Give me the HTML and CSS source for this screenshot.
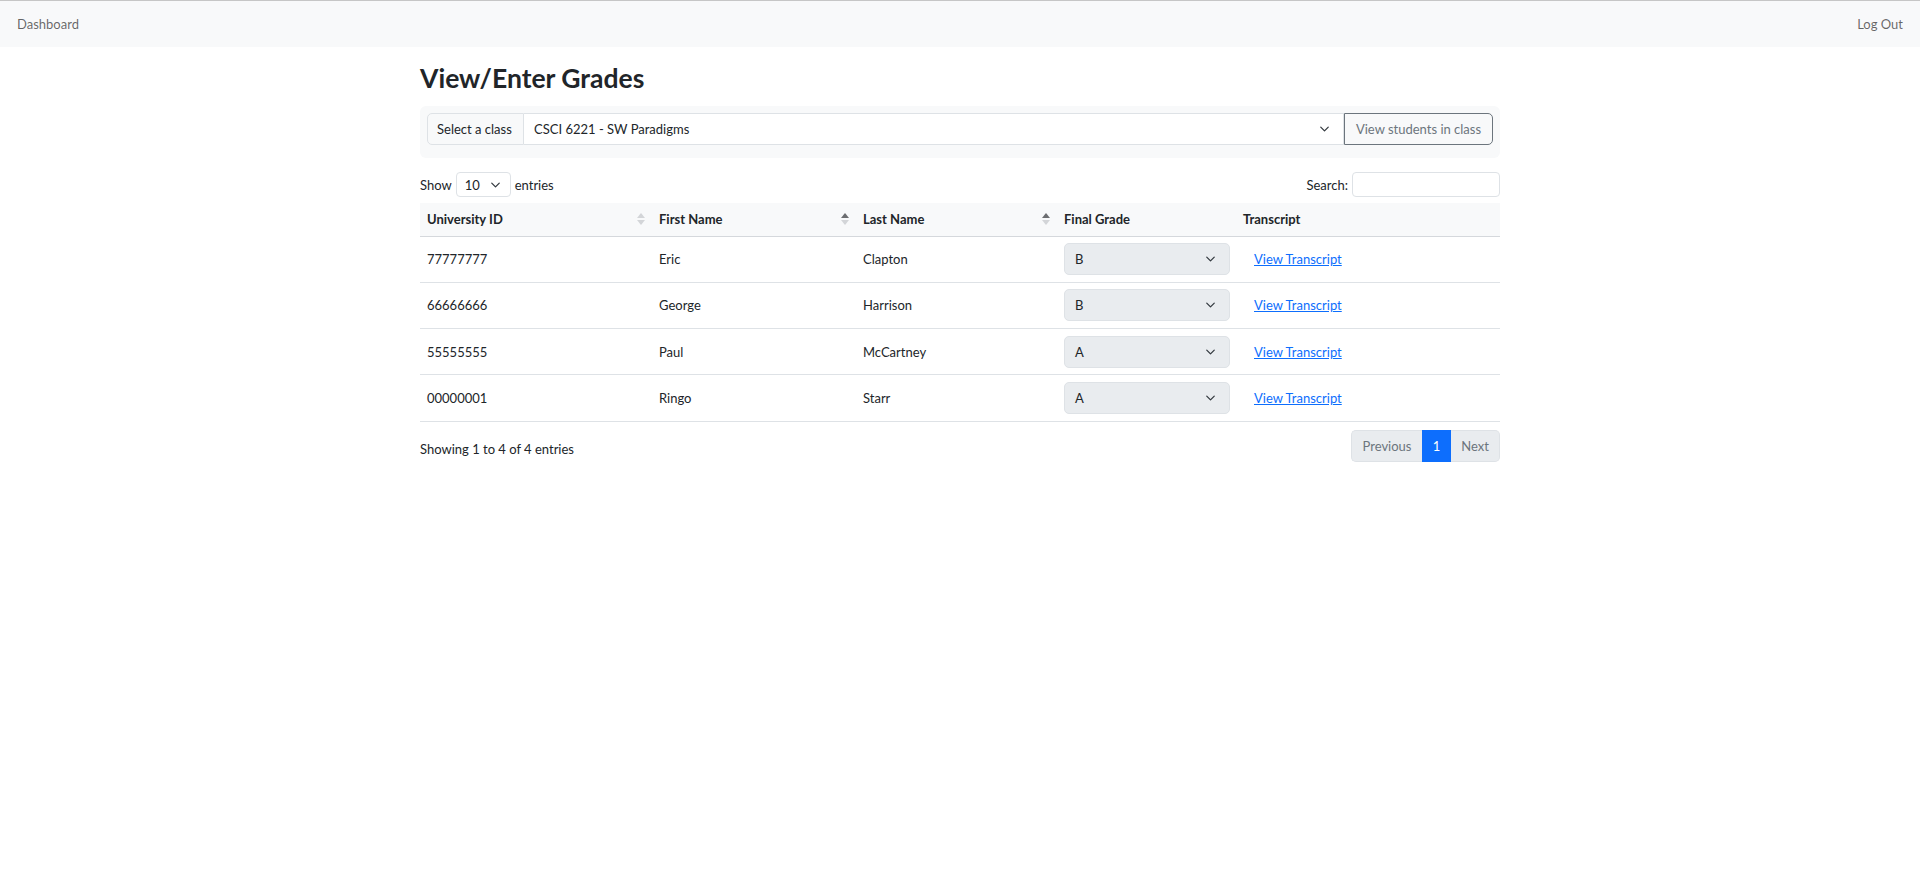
FILE: index.html
```html
<!DOCTYPE html>
<html lang="en">
<head>
<meta charset="utf-8">
<title>View/Enter Grades</title>
<link rel="stylesheet" href="styles.css">
</head>
<body>
<nav class="navbar">
  <a class="nav-link" href="#">Dashboard</a>
  <a class="nav-link" href="#">Log Out</a>
</nav>
<main class="container">
  <h1 class="title">View/Enter Grades</h1>
  <div class="panel">
    <div class="input-group">
      <span class="addon">Select a class</span>
      <div class="select wide"><span>CSCI 6221 - SW Paradigms</span><svg class="chev" viewBox="0 0 16 16"><path d="m2 5 6 6 6-6"/></svg></div>
      <button class="btn-outline">View students in class</button>
    </div>
  </div>
  <div class="dt-top">
    <div class="length">Show <div class="select small"><span>10</span><svg class="chev" viewBox="0 0 16 16"><path d="m2 5 6 6 6-6"/></svg></div> entries</div>
    <div class="search">Search: <span class="search-input"></span></div>
  </div>
  <table class="grid">
    <colgroup>
      <col class="c1"><col class="c2"><col class="c3"><col class="c4"><col class="c5">
    </colgroup>
    <thead>
      <tr>
        <th><div class="th-in">University ID<span class="sort"><i class="up"></i><i class="down"></i></span></div></th>
        <th><div class="th-in">First Name<span class="sort asc"><i class="up"></i><i class="down"></i></span></div></th>
        <th><div class="th-in">Last Name<span class="sort asc"><i class="up"></i><i class="down"></i></span></div></th>
        <th><div class="th-in">Final Grade</div></th>
        <th><div class="th-in">Transcript</div></th>
      </tr>
    </thead>
    <tbody>
      <tr><td>77777777</td><td>Eric</td><td>Clapton</td><td><div class="select grade"><span>B</span><svg class="chev" viewBox="0 0 16 16"><path d="m2 5 6 6 6-6"/></svg></div></td><td><a class="link" href="#">View Transcript</a></td></tr>
      <tr><td>66666666</td><td>George</td><td>Harrison</td><td><div class="select grade"><span>B</span><svg class="chev" viewBox="0 0 16 16"><path d="m2 5 6 6 6-6"/></svg></div></td><td><a class="link" href="#">View Transcript</a></td></tr>
      <tr><td>55555555</td><td>Paul</td><td>McCartney</td><td><div class="select grade"><span>A</span><svg class="chev" viewBox="0 0 16 16"><path d="m2 5 6 6 6-6"/></svg></div></td><td><a class="link" href="#">View Transcript</a></td></tr>
      <tr><td>00000001</td><td>Ringo</td><td>Starr</td><td><div class="select grade"><span>A</span><svg class="chev" viewBox="0 0 16 16"><path d="m2 5 6 6 6-6"/></svg></div></td><td><a class="link" href="#">View Transcript</a></td></tr>
    </tbody>
  </table>
  <div class="dt-bottom">
    <div class="info">Showing 1 to 4 of 4 entries</div>
    <ul class="pagination">
      <li class="page disabled">Previous</li>
      <li class="page active">1</li>
      <li class="page disabled">Next</li>
    </ul>
  </div>
</main>
</body>
</html>
```

FILE: styles.css
```css
* { box-sizing: border-box; }
html, body { margin: 0; padding: 0; }
body {
  font-family: Lato, "Open Sans", sans-serif;
  font-size: 13px;
  color: #212529;
  background: #fff;
}
.navbar {
  height: 47px;
  border-top: 1px solid #c6c6c6;
  background: #f8f9fa;
  display: flex;
  justify-content: space-between;
  align-items: center;
  padding: 0 17px;
}
.nav-link {
  color: rgba(0,0,0,0.6);
  text-decoration: none;
  font-size: 13px;
}
.container {
  width: 1080px;
  margin: 0 auto;
}
.title {
  font-size: 26.5px;
  font-weight: 700;
  line-height: 34px;
  margin: 14px 0 11px;
}
.panel {
  background: #f8f9fa;
  border-radius: 6px;
  padding: 7px 7px 13px 7px;
}
.input-group {
  display: flex;
  height: 32px;
}
.addon {
  display: flex;
  align-items: center;
  padding: 0 9px;
  background: #f8f9fa;
  border: 1px solid #dee2e6;
  border-radius: 5px 0 0 5px;
  width: 97px;
  white-space: nowrap;
}
.select {
  display: flex;
  align-items: center;
  justify-content: space-between;
  border: 1px solid #dee2e6;
  background: #fff;
}
.select .chev {
  width: 13px;
  height: 10px;
  fill: none;
  stroke: #343a40;
  stroke-width: 2;
  stroke-linecap: round;
  stroke-linejoin: round;
}
.select.wide {
  flex: 1;
  border-left: 0;
  padding: 0 12px 0 10px;
}
.btn-outline {
  width: 149px;
  border: 1px solid #6c757d;
  background: transparent;
  color: #6c757d;
  font: inherit;
  border-radius: 0 5px 5px 0;
  padding: 0;
}
.dt-top {
  display: flex;
  justify-content: space-between;
  align-items: center;
  margin-top: 14px;
  height: 25px;
}
.length {
  display: flex;
  align-items: center;
  gap: 4px;
}
.select.small {
  width: 55px;
  height: 25px;
  border-radius: 4px;
  padding: 0 8px 0 8px;
}
.search {
  display: flex;
  align-items: center;
  gap: 4px;
}
.search-input {
  display: block;
  width: 148px;
  height: 25px;
  border: 1px solid #dee2e6;
  border-radius: 4px;
  background: #fff;
}
.grid {
  width: 100%;
  border-collapse: collapse;
  margin-top: 6px;
  table-layout: fixed;
}
.c1 { width: 232px; }
.c2 { width: 204px; }
.c3 { width: 201px; }
.c4 { width: 179px; }
.c5 { width: 264px; }
.grid th {
  background: #f8f9fa;
  text-align: left;
  font-weight: 700;
  height: 33px;
  padding: 0 7px;
  border-bottom: 1px solid #d5d8dc;
}
.th-in {
  display: flex;
  align-items: center;
  justify-content: space-between;
}
.sort {
  display: flex;
  flex-direction: column;
  gap: 2px;
}
.sort i {
  display: block;
  width: 0;
  height: 0;
  border-left: 4px solid transparent;
  border-right: 4px solid transparent;
}
.sort .up { border-bottom: 5px solid #d3d5d8; }
.sort .down { border-top: 5px solid #d3d5d8; }
.sort.asc .up { border-bottom-color: #6c6e71; }
.grid td {
  height: 46.3px;
  padding: 0 7px;
  border-bottom: 1px solid #dee2e6;
  vertical-align: middle;
}
.select.grade {
  width: 166px;
  height: 32px;
  background: #e9ecef;
  border-radius: 5px;
  padding: 0 12px 0 10px;
}
.link {
  color: #0d6efd;
  text-decoration: underline;
  margin-left: 11px;
}
.dt-bottom {
  display: flex;
  justify-content: space-between;
  align-items: flex-start;
  margin-top: 8px;
}
.info {
  padding-top: 11px;
}
.pagination {
  display: flex;
  list-style: none;
  margin: 0;
  padding: 0;
  height: 32px;
}
.page {
  display: flex;
  align-items: center;
  padding: 0 10px;
  border: 1px solid #dee2e6;
  background: #e9ecef;
  color: #6c757d;
}
.page.disabled:first-child { border-radius: 5px 0 0 5px; border-right: 0; width: 71px; justify-content: center; }
.page.disabled:last-child { border-radius: 0 5px 5px 0; border-left: 0; width: 49px; justify-content: center; }
.page.active {
  background: #0d6efd;
  border-color: #0d6efd;
  color: #fff;
  width: 29px;
  justify-content: center;
}
```
